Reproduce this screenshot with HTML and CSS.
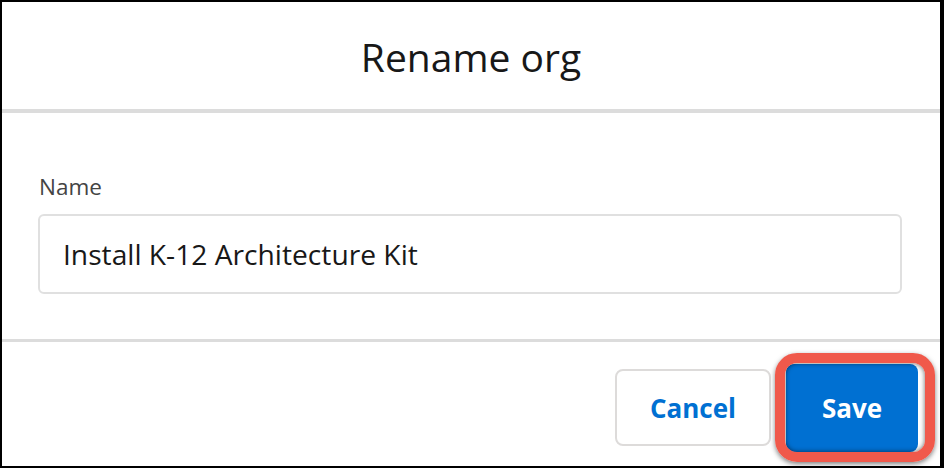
FILE: index.html
```html
<!DOCTYPE html>
<html>
<head>
<meta charset="utf-8">
<link rel="stylesheet" href="styles.css">
</head>
<body>
<div class="modal">
  <header class="header">
    <h2 class="title">Rename org</h2>
  </header>
  <section class="content">
    <label class="label" for="name">Name</label>
    <div class="input"><span class="input-text">Install K-12 Architecture Kit</span></div>
  </section>
  <footer class="footer">
    <button class="btn btn-neutral">Cancel</button>
    <div class="save-wrap">
      <button class="btn btn-brand">Save</button>
      <span class="highlight"></span>
    </div>
  </footer>
</div>
</body>
</html>
```
FILE: styles.css
```css
html, body {
  margin: 0;
  padding: 0;
  background: #000;
  width: 944px;
  height: 468px;
  overflow: hidden;
}
.modal {
  margin: 2px 4px 2px 2px;
  height: 464px;
  background: #fff;
  display: flex;
  flex-direction: column;
  font-family: "Open Sans", "Noto Sans", sans-serif;
}
.header {
  height: 107px;
  flex: none;
  display: flex;
  align-items: center;
  justify-content: center;
  border-bottom: 4px solid #dcdcdc;
}
.title {
  margin: 0;
  font-size: 39px;
  font-weight: 400;
  color: #181818;
  line-height: 1;
  position: relative;
  top: 1px;
}
.content {
  height: 229px;
  flex: none;
  box-sizing: border-box;
  padding: 60px 38px 0 36px;
  border-bottom: 3px solid #dcdcdc;
}
.label {
  display: block;
  font-size: 22.5px;
  line-height: 28px;
  color: #444444;
  margin-bottom: 13px;
  padding-left: 1px;
}
.input {
  height: 80px;
  box-sizing: border-box;
  border: 2px solid #e0e0e0;
  border-radius: 6px;
  display: flex;
  align-items: center;
  padding: 0 22px 0 23px;
}
.input-text {
  font-size: 28.2px;
  color: #181818;
}
.footer {
  flex: 1;
  display: flex;
  justify-content: flex-end;
  align-items: center;
  gap: 15px;
  padding: 7px 22px 0 0;
}
.btn {
  font-family: "Open Sans", "Noto Sans", sans-serif;
  font-size: 26px;
  font-weight: 700;
  border-radius: 8px;
  cursor: pointer;
  padding: 0;
}
.btn-neutral {
  width: 156px;
  height: 77px;
  background: #fff;
  border: 2px solid #dddbda;
  color: #0070d2;
}
.save-wrap {
  position: relative;
  display: flex;
}
.btn-brand {
  width: 132px;
  height: 88px;
  background: #0070d2;
  border: none;
  color: #fff;
}
.highlight {
  position: absolute;
  left: -11px;
  right: -17px;
  top: -11px;
  bottom: -10px;
  border: 10px solid #f0594b;
  border-radius: 22px;
  box-shadow: inset 0 0 5px rgba(0, 0, 0, 0.6), 0 2px 5px rgba(0, 0, 0, 0.5);
  pointer-events: none;
}
```
